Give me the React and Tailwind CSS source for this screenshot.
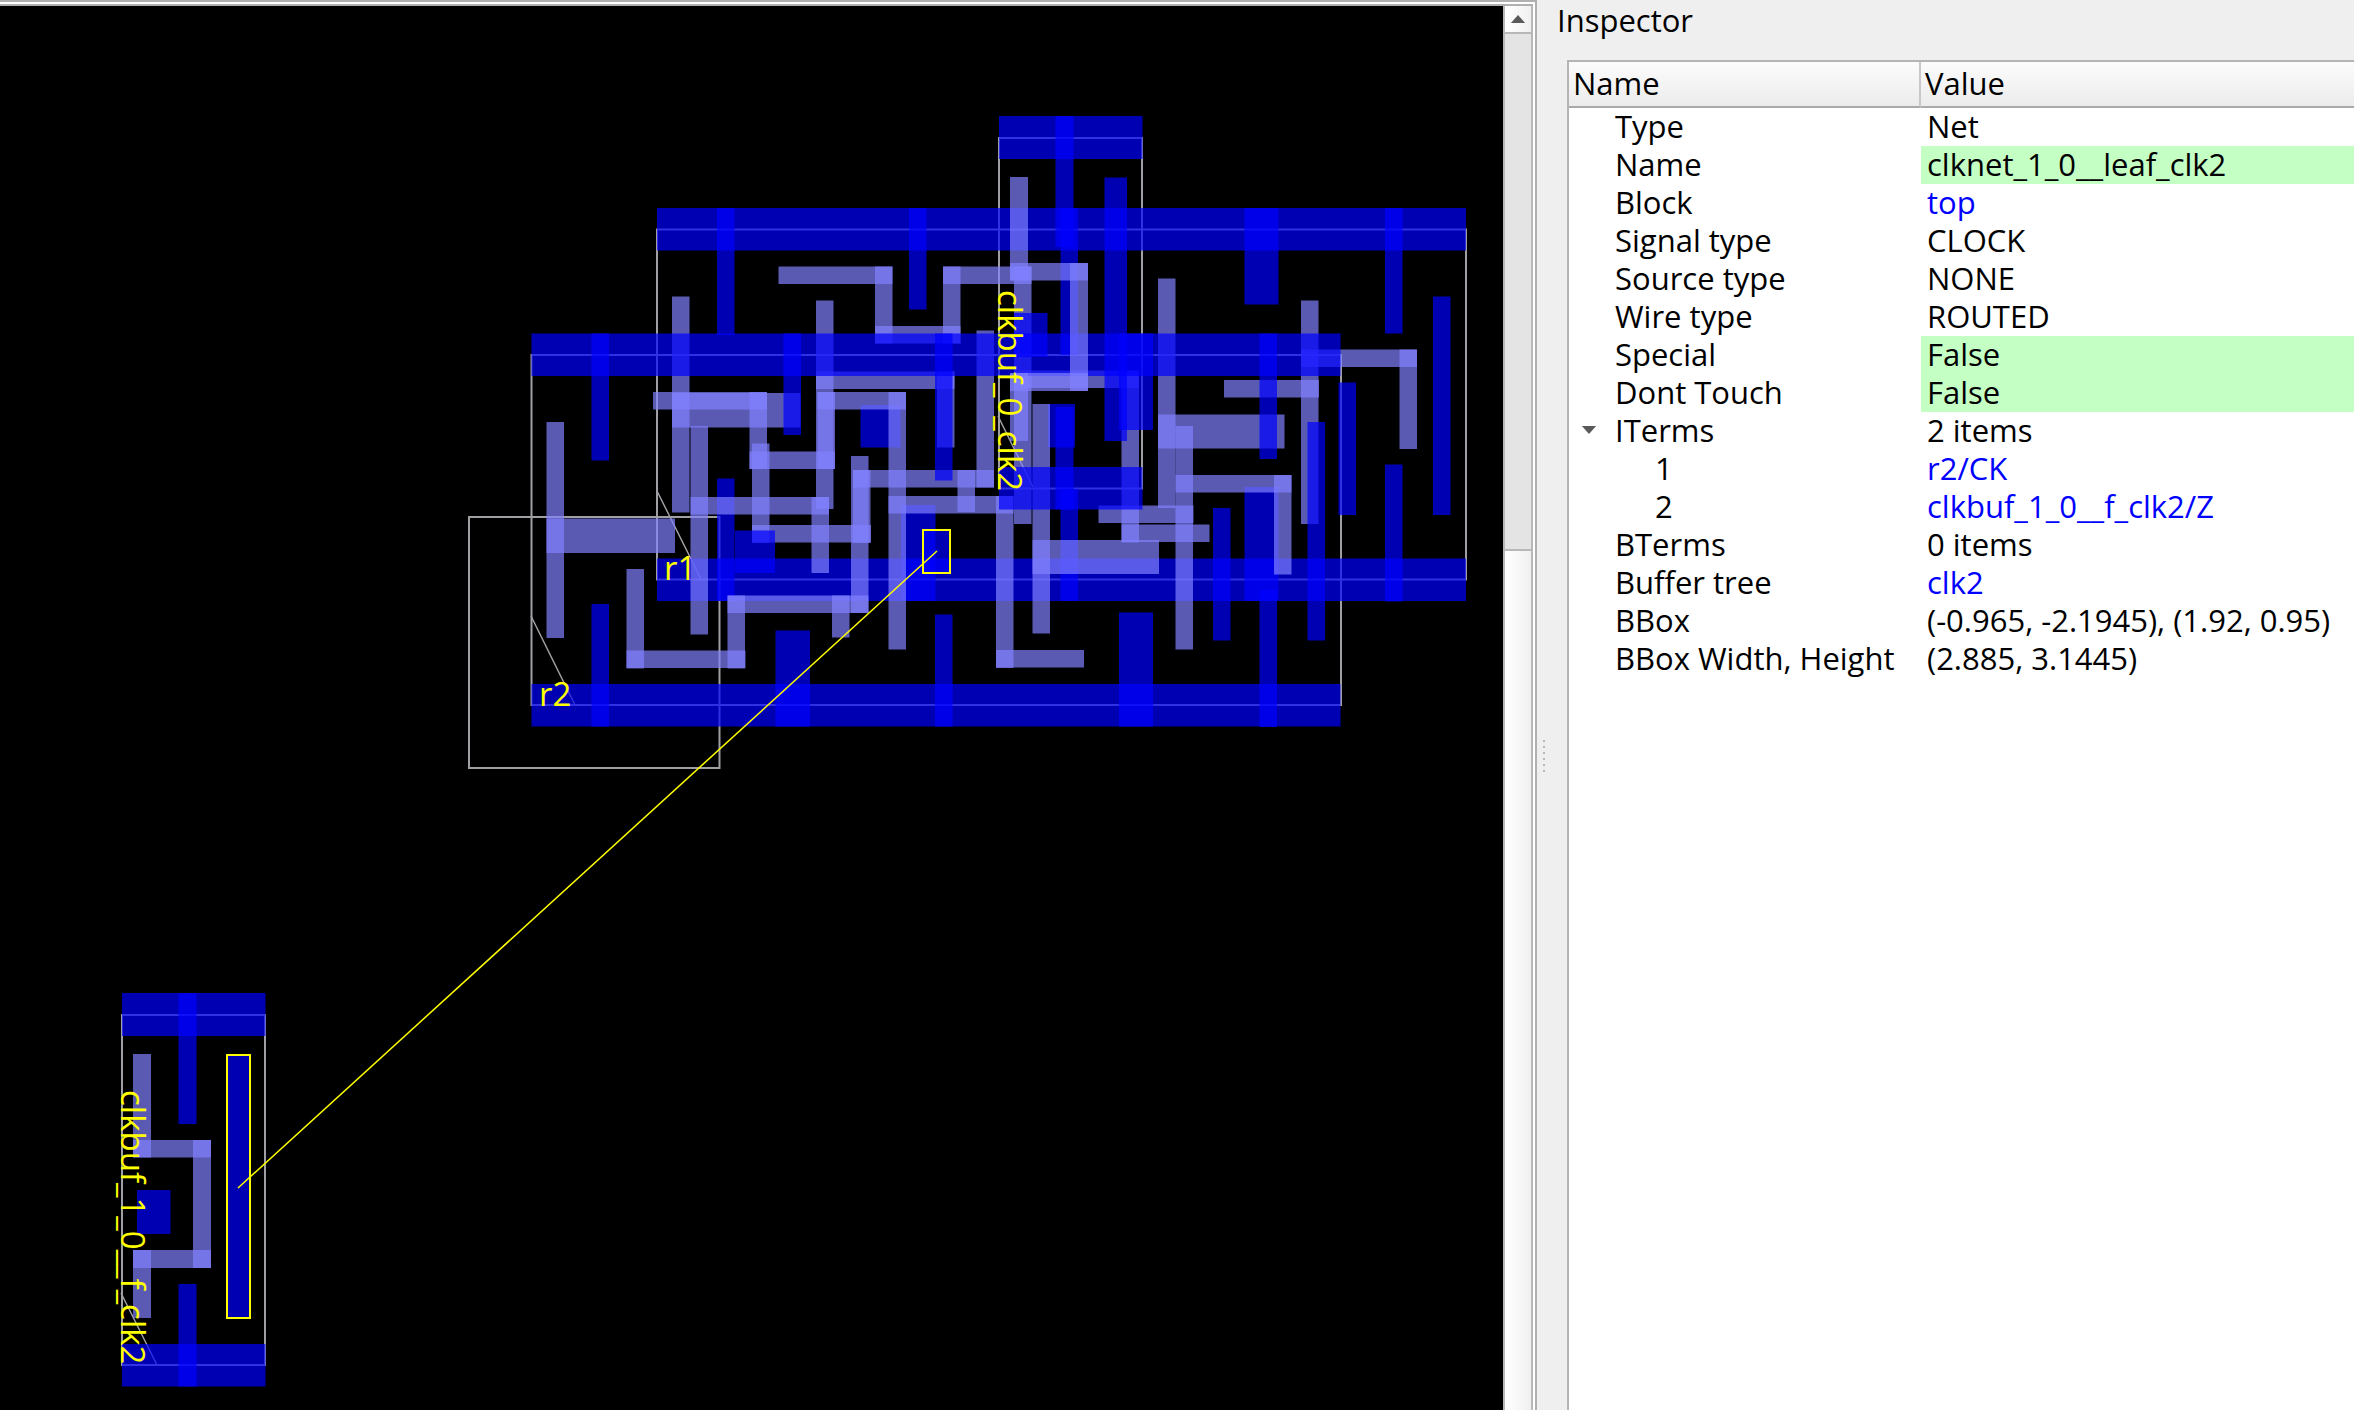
import React from "react";

const BLUE = "#0000ff";
const LIGHT = "#8080ff";

// Flip-flop master: [x, y, width, height] of each metal shape.
const FLOP_BLUE = [
  [657, 208, 809, 42.5],
  [657, 558.5, 809, 42.5],
  [717, 208, 17.5, 127],
  [717, 478.5, 17.5, 122.5],
  [909, 208, 17.5, 101.5],
  [860.5, 405, 40, 42.5],
  [1060.5, 208, 17.5, 147],
  [1060.5, 489, 17.5, 112],
  [901, 505, 34.5, 96],
  [1048, 404, 27, 43.5],
  [1244.5, 487, 34, 114],
  [1244.5, 208, 34, 96.5],
  [1385, 208, 17.5, 125.5],
  [1385, 464.5, 17.5, 137],
  [1433, 296.5, 17.5, 218.5],
  [1338.5, 382.5, 17.5, 132.5],
];

const FLOP_LIGHT = [
  [672, 296.5, 17.5, 216],
  [672, 393, 128.5, 34.5],
  [752, 443.5, 17.5, 99.5],
  [752, 525, 119, 17.5],
  [853, 470, 17.5, 73],
  [853, 470, 141, 17.5],
  [957.5, 470, 17.5, 42],
  [976.5, 330.5, 17.5, 157],
  [778.5, 266.5, 114, 17.5],
  [875, 266.5, 17.5, 77],
  [875, 326, 85.5, 17.5],
  [943, 266.5, 17.5, 77],
  [943, 266.5, 88.5, 17.5],
  [1014, 266.5, 17.5, 257.5],
  [816, 300.5, 17.5, 208.5],
  [816, 371.5, 138.5, 17.5],
  [937, 371.5, 17.5, 76],
  [1158, 278.5, 17.5, 229.5],
  [1158, 414.5, 126.5, 34],
  [1014, 370.5, 125, 17.5],
  [1121.5, 370.5, 17.5, 172],
  [1121.5, 524.5, 88, 17.5],
  [1224, 380, 95, 17.5],
  [1301, 300.5, 17.5, 223.5],
  [1301, 349.5, 116, 17.5],
  [1399.5, 349.5, 17.5, 99.5],
];

// Clock buffer master.
const BUF_BLUE = [
  [122, 993, 143.5, 43],
  [122, 1344, 143.5, 42.5],
  [178.5, 993, 18, 131],
  [178.5, 1284, 18, 102.5],
  [137, 1190, 33.5, 44],
  [227.5, 1054.5, 22.5, 263.5],
];

const BUF_LIGHT = [
  [133, 1054, 18, 103.5],
  [133, 1140, 78, 17.5],
  [193, 1140, 18, 128],
  [133, 1250, 78, 18],
  [133, 1250, 18, 68],
];

// Each shape is translucent, so overlaps come out brighter.
function Shapes({ rects, fill }) {
  return rects.map(([x, y, w, h], i) => (
    <rect key={i} x={x} y={y} width={w} height={h} fill={fill} fillOpacity="0.7" />
  ));
}

function Cell({ blue, light, shift }) {
  return (
    <g transform={shift}>
      <Shapes rects={blue} fill={BLUE} />
      <Shapes rects={light} fill={LIGHT} />
    </g>
  );
}

function LayoutView() {
  return (
    <svg
      role="img"
      aria-label="Chip layout"
      className="block h-full w-full bg-black"
      viewBox="0 6 1503 1404"
      preserveAspectRatio="xMinYMin slice"
    >
      <g fill="none" stroke="#a0a0a4" strokeWidth="2">
        <rect x="469" y="517" width="250.5" height="251" />
        <rect x="657" y="229.5" width="809" height="350" />
        <rect x="531.5" y="355" width="809.5" height="350" />
        <rect x="999" y="138" width="143" height="350.5" />
        <rect x="122" y="1015" width="143" height="350" />
        <path
          strokeWidth="1.5"
          d="M657 491 701 579M531 616 575 705M998 416 1033 487M121 1293 157 1365"
        />
      </g>
      <Cell blue={FLOP_BLUE} light={FLOP_LIGHT} />
      <Cell blue={FLOP_BLUE} light={FLOP_LIGHT} shift="translate(-125.5 125.5)" />
      <Cell blue={BUF_BLUE} light={BUF_LIGHT} />
      <Cell blue={BUF_BLUE} light={BUF_LIGHT} shift="translate(877 -877)" />
      <g fill="none" stroke="#ffff00" strokeWidth="2">
        <rect x="923" y="530" width="27" height="43" />
        <rect x="227" y="1055" width="23" height="263" />
        <path strokeWidth="1.5" d="M937 551 238 1188" />
      </g>
      <g fill="#ffff00" className="font-['Open_Sans',sans-serif] text-[33px]">
        <text x="664" y="580">r1</text>
        <text x="539" y="706">r2</text>
        <text transform="translate(998 290) rotate(90)">clkbuf_0_clk2</text>
        <text transform="translate(121 1090) rotate(90)">clkbuf_1_0__f_clk2</text>
      </g>
    </svg>
  );
}

function VerticalScrollbar() {
  return (
    <div className="flex w-[30px] shrink-0 flex-col border-x-2 border-[#b8b8b8] bg-[#e4e4e4]">
      <button
        type="button"
        aria-label="Scroll up"
        className="flex h-7 shrink-0 items-center justify-center border-b-2 border-[#b8b8b8] bg-linear-to-r from-white to-[#f0f0f0]"
      >
        <svg viewBox="0 0 16 9" className="h-2 w-4" fill="#5a5a5a">
          <path d="M8 0 16 9H0Z" />
        </svg>
      </button>
      <div className="flex-3" />
      <div className="flex-5 border-t-2 border-[#b8b8b8] bg-linear-to-r from-white to-[#f0f0f0]" />
    </div>
  );
}

const ROWS = [
  { name: "Type", value: "Net" },
  { name: "Name", value: "clknet_1_0__leaf_clk2", editable: true },
  { name: "Block", value: "top", link: true },
  { name: "Signal type", value: "CLOCK" },
  { name: "Source type", value: "NONE" },
  { name: "Wire type", value: "ROUTED" },
  { name: "Special", value: "False", editable: true },
  { name: "Dont Touch", value: "False", editable: true },
  { name: "ITerms", value: "2 items", expanded: true },
  { name: "1", value: "r2/CK", link: true, child: true },
  { name: "2", value: "clkbuf_1_0__f_clk2/Z", link: true, child: true },
  { name: "BTerms", value: "0 items" },
  { name: "Buffer tree", value: "clk2", link: true },
  { name: "BBox", value: "(-0.965, -2.1945), (1.92, 0.95)" },
  { name: "BBox Width, Height", value: "(2.885, 3.1445)" },
];

function Row({ name, value, editable, link, expanded, child }) {
  return (
    <tr className="h-[38px] align-top">
      <td className="p-0">
        <div className="flex items-center">
          <span className="flex w-[46px] shrink-0 items-center pl-3">
            {expanded && (
              <button type="button" aria-label="Collapse ITerms" className="flex">
                <svg viewBox="0 0 16 9" className="h-2 w-4" fill="#5a5a5a">
                  <path d="M0 0H16L8 9Z" />
                </svg>
              </button>
            )}
          </span>
          <span className={child ? "pl-10" : ""}>{name}</span>
        </div>
      </td>
      <td className={editable ? "bg-[#c4ffc4] p-0 pl-1.5" : "p-0 pl-1.5"}>
        {link ? (
          <a href="#" className="text-[#0000ff]">
            {value}
          </a>
        ) : (
          value
        )}
      </td>
    </tr>
  );
}

function Inspector() {
  return (
    <aside className="flex w-[797px] shrink-0 flex-col">
      <h2 className="h-[60px] leading-10">Inspector</h2>
      <div className="ml-2.5 flex-1 overflow-hidden border-t-2 border-l-2 border-[#b4b4b4] bg-white">
        <table className="w-full table-fixed border-separate border-spacing-0 whitespace-nowrap">
          <thead>
            <tr className="h-[46px] bg-linear-to-b from-[#fcfcfc] to-[#ebebeb] text-left">
              <th className="w-[352px] border-r-2 border-b-2 border-r-[#c8c8c8] border-b-[#aaaaaa] p-0 pb-0.5 pl-1 font-normal">
                Name
              </th>
              <th className="border-b-2 border-[#aaaaaa] p-0 pb-0.5 pl-1 font-normal">Value</th>
            </tr>
          </thead>
          <tbody>
            {ROWS.map((row) => (
              <Row key={row.name} {...row} />
            ))}
          </tbody>
        </table>
      </div>
    </aside>
  );
}

export default function App() {
  return (
    <div className="flex h-screen overflow-hidden bg-[#efefef] font-['Open_Sans',sans-serif] text-[31px] leading-9 text-black">
      <main className="flex min-w-0 flex-1 flex-col border-t-2 border-r-2 border-[#b0b0b0]">
        <div className="flex min-h-0 flex-1 border-t-2 border-r-2 border-white">
          <div className="flex min-w-0 flex-1 border-t-2 border-[#b0b0b0]">
            <div className="min-w-0 flex-1">
              <LayoutView />
            </div>
            <VerticalScrollbar />
          </div>
        </div>
      </main>
      <div className="flex w-5 shrink-0 flex-col justify-center gap-1 pt-[102px] pl-1.5">
        {[0, 1, 2, 3, 4, 5].map((n) => (
          <span key={n} className="size-0.5 bg-[#b8b8b8]" />
        ))}
      </div>
      <Inspector />
    </div>
  );
}
